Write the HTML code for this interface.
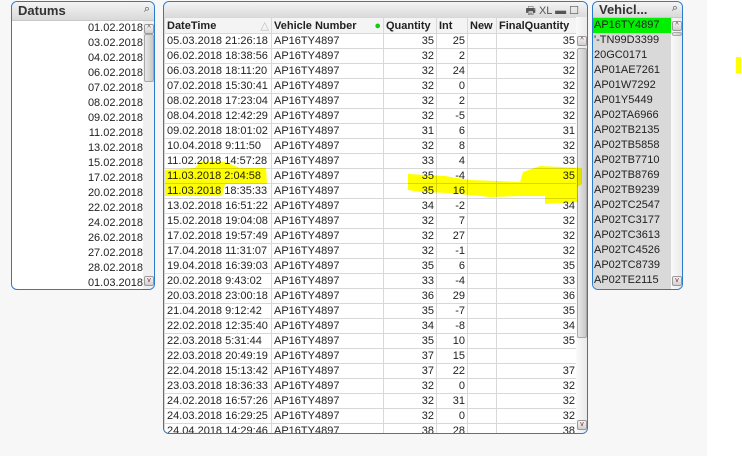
<!DOCTYPE html>
<html><head><meta charset="utf-8"><style>
*{margin:0;padding:0;box-sizing:border-box}
body{width:742px;height:456px;background:#f7f7f7;position:relative;overflow:hidden;font-family:"Liberation Sans","DejaVu Sans",sans-serif;font-size:11px;color:#222}
.white{position:absolute;left:707px;top:0;width:35px;height:456px;background:#fff}
.box{position:absolute;background:#fff;border:1px solid #2a7bd0;border-radius:6px}
.title{position:absolute;left:0;right:0;top:0;background:linear-gradient(#f4f4f4,#d9d9d9);border-radius:5px 5px 0 0;border-bottom:1px solid #c8c8c8}
.title b{position:absolute;left:6px;top:1px;font-size:13px;color:#333}
.row{position:absolute;height:15px;line-height:15px;white-space:nowrap}
.sb{position:absolute;background:#f0f0f0}
.btn{position:absolute;width:10px;height:10px;border:1px solid #9a9a9a;background:linear-gradient(#f5f5f5,#d0d0d0);border-radius:2px;font-size:7px;line-height:8px;text-align:center;color:#8a2020}
.thumb{position:absolute;background:linear-gradient(90deg,#e8e8e8,#c8c8c8);border:1px solid #a8a8a8;border-radius:2px}
table{border-collapse:collapse;table-layout:fixed;position:absolute;left:0;top:15px}
td{height:15px;border:1px solid #d8d8d8;padding:0 2px;white-space:nowrap;overflow:hidden;line-height:14px}
td.r{text-align:right}
tr.h td{font-weight:bold;background:#f4f4f4;height:16px}
</style></head><body>
<div class="white"></div>
<div style="position:absolute;left:736px;top:57px;width:5px;height:16px;background:#ffff00"></div>

<!-- Datums -->
<div class="box" style="left:11px;top:1px;width:144px;height:289px;overflow:hidden">
<div class="title" style="height:19px"><b>Datums</b><span style="position:absolute;right:4px;top:1px;font-size:11px;color:#444">&#x2315;</span></div>
<div style="position:absolute;left:0;top:19px;width:131px">
<div class="row" style="top:0;right:0">01.02.2018</div>
<div class="row" style="top:15px;right:0">03.02.2018</div>
<div class="row" style="top:30px;right:0">04.02.2018</div>
<div class="row" style="top:45px;right:0">06.02.2018</div>
<div class="row" style="top:60px;right:0">07.02.2018</div>
<div class="row" style="top:75px;right:0">08.02.2018</div>
<div class="row" style="top:90px;right:0">09.02.2018</div>
<div class="row" style="top:105px;right:0">11.02.2018</div>
<div class="row" style="top:120px;right:0">13.02.2018</div>
<div class="row" style="top:135px;right:0">15.02.2018</div>
<div class="row" style="top:150px;right:0">17.02.2018</div>
<div class="row" style="top:165px;right:0">20.02.2018</div>
<div class="row" style="top:180px;right:0">22.02.2018</div>
<div class="row" style="top:195px;right:0">24.02.2018</div>
<div class="row" style="top:210px;right:0">26.02.2018</div>
<div class="row" style="top:225px;right:0">27.02.2018</div>
<div class="row" style="top:240px;right:0">28.02.2018</div>
<div class="row" style="top:255px;right:0">01.03.2018</div>
</div>
<div class="sb" style="left:131px;top:19px;width:12px;height:270px"></div>
<div class="btn" style="left:132px;top:22px">^</div>
<div class="thumb" style="left:132px;top:32px;width:10px;height:48px"></div>
<div class="btn" style="left:132px;top:274px">v</div>
</div>

<!-- Table -->
<div class="box" style="left:163px;top:1px;width:425px;height:433px;overflow:hidden">
<div class="title" style="height:16px;border-bottom:none"><span style="position:absolute;right:8px;top:0;font-size:11px;color:#555">&#x1F5B6; XL ▬ ☐</span></div>
<table>
<colgroup><col style="width:107px"><col style="width:112px"><col style="width:53px"><col style="width:31px"><col style="width:29px"><col style="width:81px"></colgroup>
<tr class="h"><td>DateTime<span style="float:right;color:#bbb;font-weight:normal">&#9651;</span></td><td>Vehicle Number<span style="float:right;color:#1c1;">&#9679;</span></td><td>Quantity</td><td>Int</td><td>New</td><td>FinalQuantity</td></tr>
<tr><td>05.03.2018 21:26:18</td><td>AP16TY4897</td><td class="r">35</td><td class="r">25</td><td></td><td class="r">35</td></tr>
<tr><td>06.02.2018 18:38:56</td><td>AP16TY4897</td><td class="r">32</td><td class="r">2</td><td></td><td class="r">32</td></tr>
<tr><td>06.03.2018 18:11:20</td><td>AP16TY4897</td><td class="r">32</td><td class="r">24</td><td></td><td class="r">32</td></tr>
<tr><td>07.02.2018 15:30:41</td><td>AP16TY4897</td><td class="r">32</td><td class="r">0</td><td></td><td class="r">32</td></tr>
<tr><td>08.02.2018 17:23:04</td><td>AP16TY4897</td><td class="r">32</td><td class="r">2</td><td></td><td class="r">32</td></tr>
<tr><td>08.04.2018 12:42:29</td><td>AP16TY4897</td><td class="r">32</td><td class="r">-5</td><td></td><td class="r">32</td></tr>
<tr><td>09.02.2018 18:01:02</td><td>AP16TY4897</td><td class="r">31</td><td class="r">6</td><td></td><td class="r">31</td></tr>
<tr><td>10.04.2018 9:11:50</td><td>AP16TY4897</td><td class="r">32</td><td class="r">8</td><td></td><td class="r">32</td></tr>
<tr><td>11.02.2018 14:57:28</td><td>AP16TY4897</td><td class="r">33</td><td class="r">4</td><td></td><td class="r">33</td></tr>
<tr><td>11.03.2018 2:04:58</td><td>AP16TY4897</td><td class="r">35</td><td class="r">-4</td><td></td><td class="r">35</td></tr>
<tr><td>11.03.2018 18:35:33</td><td>AP16TY4897</td><td class="r">35</td><td class="r">16</td><td></td><td class="r"></td></tr>
<tr><td>13.02.2018 16:51:22</td><td>AP16TY4897</td><td class="r">34</td><td class="r">-2</td><td></td><td class="r">34</td></tr>
<tr><td>15.02.2018 19:04:08</td><td>AP16TY4897</td><td class="r">32</td><td class="r">7</td><td></td><td class="r">32</td></tr>
<tr><td>17.02.2018 19:57:49</td><td>AP16TY4897</td><td class="r">32</td><td class="r">27</td><td></td><td class="r">32</td></tr>
<tr><td>17.04.2018 11:31:07</td><td>AP16TY4897</td><td class="r">32</td><td class="r">-1</td><td></td><td class="r">32</td></tr>
<tr><td>19.04.2018 16:39:03</td><td>AP16TY4897</td><td class="r">35</td><td class="r">6</td><td></td><td class="r">35</td></tr>
<tr><td>20.02.2018 9:43:02</td><td>AP16TY4897</td><td class="r">33</td><td class="r">-4</td><td></td><td class="r">33</td></tr>
<tr><td>20.03.2018 23:00:18</td><td>AP16TY4897</td><td class="r">36</td><td class="r">29</td><td></td><td class="r">36</td></tr>
<tr><td>21.04.2018 9:12:42</td><td>AP16TY4897</td><td class="r">35</td><td class="r">-7</td><td></td><td class="r">35</td></tr>
<tr><td>22.02.2018 12:35:40</td><td>AP16TY4897</td><td class="r">34</td><td class="r">-8</td><td></td><td class="r">34</td></tr>
<tr><td>22.03.2018 5:31:44</td><td>AP16TY4897</td><td class="r">35</td><td class="r">10</td><td></td><td class="r">35</td></tr>
<tr><td>22.03.2018 20:49:19</td><td>AP16TY4897</td><td class="r">37</td><td class="r">15</td><td></td><td class="r"></td></tr>
<tr><td>22.04.2018 15:13:42</td><td>AP16TY4897</td><td class="r">37</td><td class="r">22</td><td></td><td class="r">37</td></tr>
<tr><td>23.03.2018 18:36:33</td><td>AP16TY4897</td><td class="r">32</td><td class="r">0</td><td></td><td class="r">32</td></tr>
<tr><td>24.02.2018 16:57:26</td><td>AP16TY4897</td><td class="r">32</td><td class="r">31</td><td></td><td class="r">32</td></tr>
<tr><td>24.03.2018 16:29:25</td><td>AP16TY4897</td><td class="r">32</td><td class="r">0</td><td></td><td class="r">32</td></tr>
<tr><td>24.04.2018 14:29:46</td><td>AP16TY4897</td><td class="r">38</td><td class="r">28</td><td></td><td class="r">38</td></tr>
</table>
<div class="sb" style="left:412px;top:15px;width:12px;height:417px;background:linear-gradient(90deg,#fafafa,#e8e8e8)"></div>
<div class="btn" style="left:413px;top:34px">^</div>
<div class="thumb" style="left:413px;top:46px;width:10px;height:290px"></div>
<div class="btn" style="left:413px;top:418px">v</div>
</div>

<!-- Vehicle -->
<div class="box" style="left:592px;top:1px;width:91px;height:289px;overflow:hidden">
<div class="title" style="height:16px"><b style="top:0">Vehicl...</b><span style="position:absolute;right:4px;top:0;font-size:11px;color:#444">&#x2315;</span></div>
<div style="position:absolute;left:0;top:16px;width:78px;height:272px;background:#d9d9d9">
<div class="row" style="top:0;left:0;width:78px;background:#00f000;padding-left:1px">AP16TY4897</div>
<div class="row" style="top:15px;left:1px">'-TN99D3399</div>
<div class="row" style="top:30px;left:1px">20GC0171</div>
<div class="row" style="top:45px;left:1px">AP01AE7261</div>
<div class="row" style="top:60px;left:1px">AP01W7292</div>
<div class="row" style="top:75px;left:1px">AP01Y5449</div>
<div class="row" style="top:90px;left:1px">AP02TA6966</div>
<div class="row" style="top:105px;left:1px">AP02TB2135</div>
<div class="row" style="top:120px;left:1px">AP02TB5858</div>
<div class="row" style="top:135px;left:1px">AP02TB7710</div>
<div class="row" style="top:150px;left:1px">AP02TB8769</div>
<div class="row" style="top:165px;left:1px">AP02TB9239</div>
<div class="row" style="top:180px;left:1px">AP02TC2547</div>
<div class="row" style="top:195px;left:1px">AP02TC3177</div>
<div class="row" style="top:210px;left:1px">AP02TC3613</div>
<div class="row" style="top:225px;left:1px">AP02TC4526</div>
<div class="row" style="top:240px;left:1px">AP02TC8739</div>
<div class="row" style="top:255px;left:1px">AP02TE2115</div>
</div>
<div class="sb" style="left:78px;top:16px;width:12px;height:272px;background:linear-gradient(90deg,#fafafa,#e8e8e8)"></div>
<div class="btn" style="left:79px;top:19px">^</div>
<div class="thumb" style="left:79px;top:30px;width:10px;height:4px"></div>
<div class="btn" style="left:79px;top:274px">v</div>
</div>

<svg width="742" height="456" style="position:absolute;left:0;top:0;mix-blend-mode:multiply;pointer-events:none">
<polygon fill="#ffff00" points="165,170 195,168 200,162 225,162 240,168 266,168 267,184 225,184 222,196 165,196"/>
<polygon fill="#ffff00" points="408,174 445,176 470,180 520,182 523,172 540,166 582,168 582,184 577,187 578,202 545,204 545,196 520,196 490,197 450,193 420,192 408,190"/>
</svg>
</body></html>
